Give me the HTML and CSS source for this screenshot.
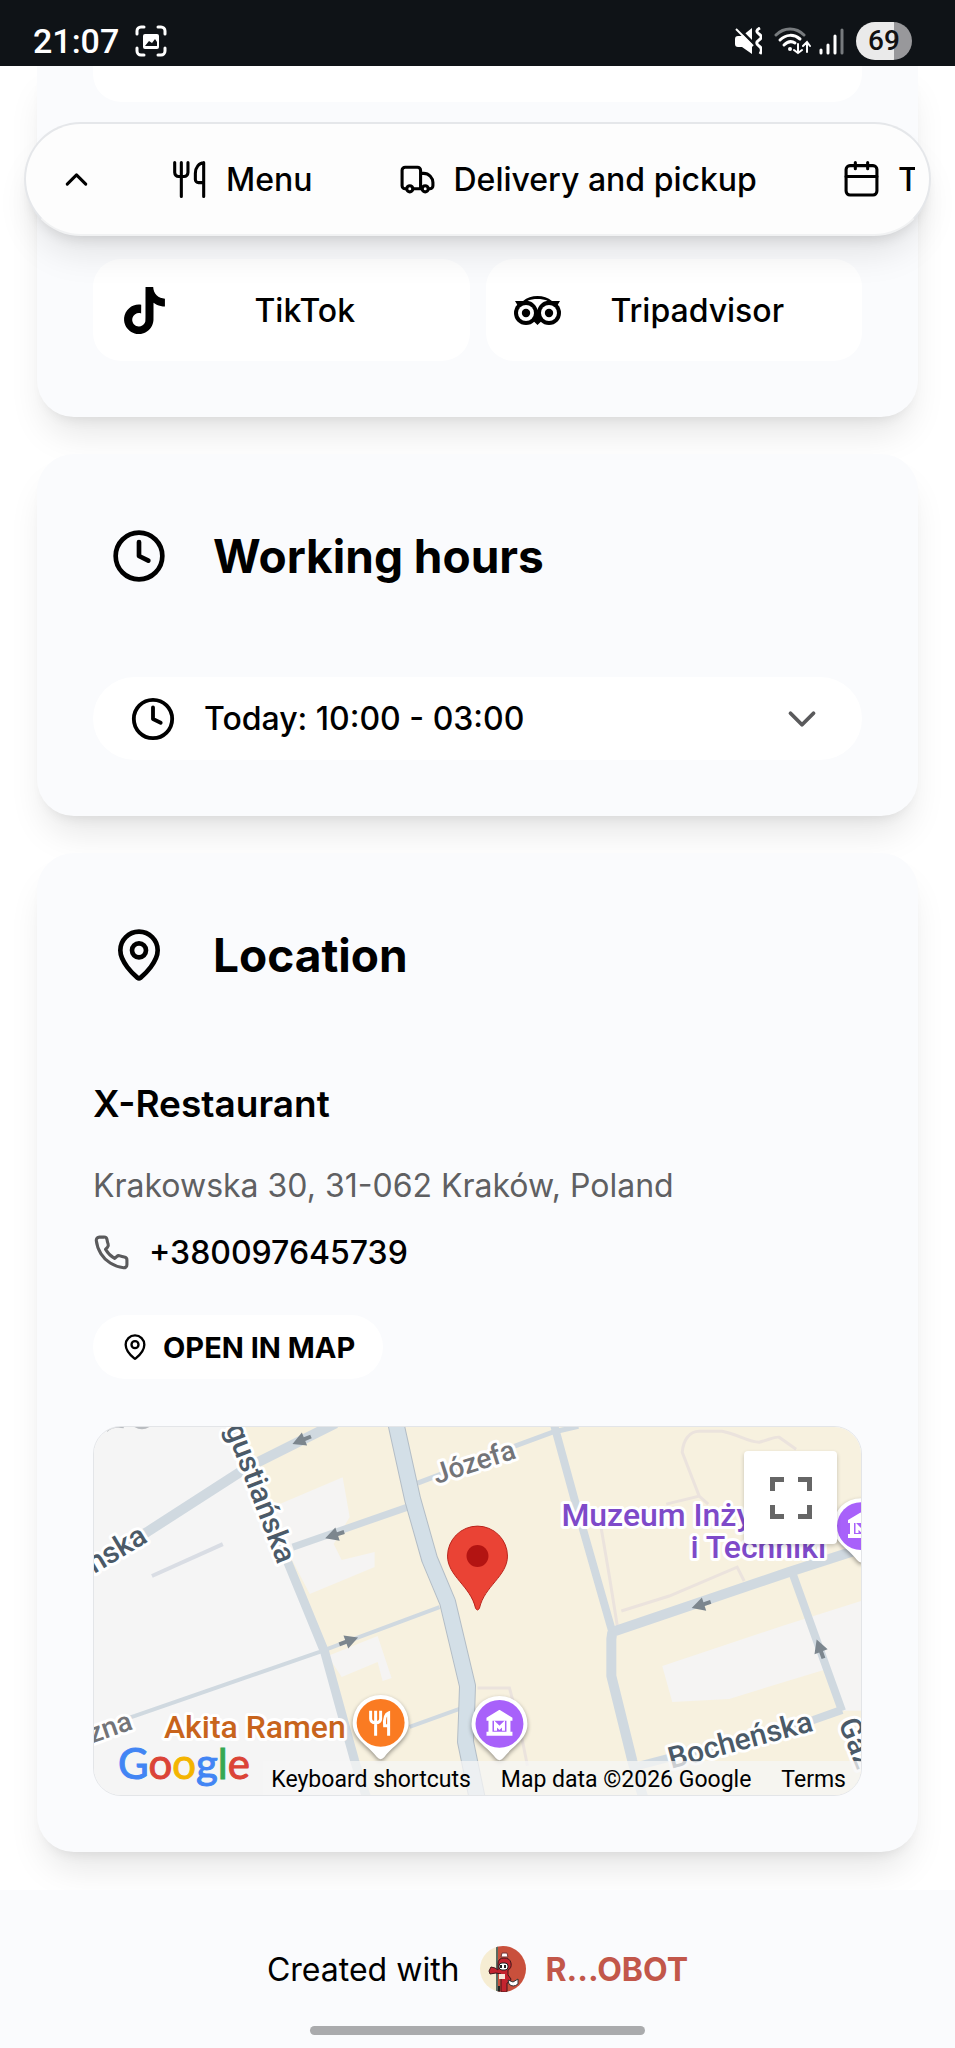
FILE: index.html
```html
<!DOCTYPE html>
<html lang="en">
<head>
<meta charset="utf-8">
<meta name="viewport" content="width=device-width, initial-scale=1">
<title>X-Restaurant</title>
<link rel="stylesheet" href="styles.css">
</head>
<body>
<svg class="defs" aria-hidden="true">
  <symbol id="clock" viewBox="0 0 24 24"><circle cx="12" cy="12" r="10"/><path d="M12 6v6l4 2"/></symbol>
  <symbol id="pin" viewBox="0 0 24 24"><path d="M20 10c0 5-5.500 10.200-7.400 11.800a1 1 0 0 1-1.200 0C9.500 20.200 4 15 4 10a8 8 0 0 1 16 0z"/><circle cx="12" cy="10" r="3"/></symbol>
  <symbol id="arrow" viewBox="-11 -8 22 16"><path d="M-10 0L3-7V-2H10V2H3V7z"/></symbol>
  <symbol id="museum" viewBox="-14 -14 28 28"><path fill="#fff" d="M0-14L13-6V-3H-13V-6zM-11-3h4V9h-4zM7-3h4V9H7zM-13 8h26v4h-26z"/><path fill="none" stroke="#fff" stroke-width="3" d="M-4 7V0L0 4L4 0V7"/></symbol>
</svg>

<header class="status">
  <span class="time">21:07</span>
  <svg class="shot" viewBox="0 0 32 32"><path fill="none" stroke="#fff" stroke-width="3" stroke-linecap="round" d="M2 9V6a4 4 0 0 1 4-4h3M23 2h3a4 4 0 0 1 4 4v3M30 23v3a4 4 0 0 1-4 4h-3M9 30H6a4 4 0 0 1-4-4v-3"/><rect x="8" y="9" width="16" height="15" rx="2" fill="#fff"/><path fill="#0f1317" d="M10 21l4-5 3 2 3-4 2 3v4z"/></svg>
  <div class="status-right">
    <svg class="mute" viewBox="0 0 28 28"><path fill="#fff" d="M1 12a3 3 0 0 1 3-3h4l10-8v26L8 20H4a3 3 0 0 1-3-3z"/><path stroke="#0f1317" stroke-width="3" d="M4 1l17 17"/><path stroke="#fff" stroke-width="2" d="M2 2l17 17"/><path fill="none" stroke="#fff" stroke-width="3" d="M26 1c-4 2-4 4-1 6s3 4 0 6-3 4 0 6 3 5 1 8"/></svg>
    <svg class="wifi" viewBox="0 0 37 28" fill="none" stroke-width="3" stroke-linecap="round"><path stroke="#777b7e" d="M2 8C10 0 22 0 30 8"/><path stroke="#fff" d="M6 13C12 7 20 7 26 12M10 18C14 14 18 14 21 16"/><circle cx="16" cy="22" r="2" fill="#fff" stroke="none"/><path stroke="#fff" stroke-width="2" d="M24 17v9M20 23l4 3 4-3M33 25V15M29 19l4-4 3 4"/></svg>
    <svg class="signal" viewBox="0 0 25 28" stroke-width="3" stroke-linecap="round" stroke="#fff"><path d="M2 23v3M9 18v8M16 9v17"/><path stroke="#777b7e" d="M23 3v23"/></svg>
    <span class="battery">69</span>
  </div>
</header>

<nav class="nav">
  <button class="nav-up" aria-label="Back to top"><svg class="ico s" viewBox="0 0 24 24"><path d="M6 15l6-6 6 6"/></svg></button>
  <div class="nav-list">
    <a href="#menu"><svg class="ico s" viewBox="0 0 24 24"><path d="M2.400 1v6.500A2.500 2.500 0 0 0 4.900 10h3.600A2.500 2.500 0 0 0 11 7.500V1M6.700 1v22M21.200 1v22M21.200 1.200c-3 0-5.400 3-5.400 6.800v4a2 2 0 0 0 2 2h3.400"/></svg>Menu</a>
    <a href="#delivery"><svg class="ico s" viewBox="0 0 24 24"><path d="M14 18V6a2 2 0 0 0-2-2H4a2 2 0 0 0-2 2v10a2 2 0 0 0 2 2h1M15 18H9M19 18h1a2 2 0 0 0 2-2v-2c0-3-2.500-6-6-6h-2"/><circle cx="17" cy="18" r="2"/><circle cx="7" cy="18" r="2"/></svg>Delivery and pickup</a>
    <a href="#table"><svg class="ico s" viewBox="0 0 24 24"><path d="M8 1v4M16 1v4M2 10h20"/><rect x="2" y="3" width="20" height="19" rx="2.500"/></svg>T</a>
  </div>
</nav>

<main class="page">
  <section class="card card-links">
    <div class="tile-end"></div>
    <div class="links">
      <a class="tile" href="#tiktok"><svg viewBox="0 0 24 24"><path d="M12.525.02c1.310-.02 2.610-.01 3.910-.02.08 1.530.63 3.090 1.750 4.170 1.120 1.110 2.700 1.620 4.240 1.790v4.030c-1.440-.05-2.890-.35-4.200-.97-.57-.26-1.100-.59-1.620-.93-.01 2.920.01 5.840-.02 8.750-.08 1.400-.54 2.790-1.350 3.940-1.310 1.920-3.580 3.170-5.910 3.210-1.430.08-2.860-.31-4.080-1.030-2.020-1.190-3.440-3.370-3.650-5.710-.02-.5-.03-1-.01-1.490.18-1.900 1.120-3.720 2.580-4.960 1.660-1.440 3.980-2.130 6.150-1.720.02 1.480-.04 2.960-.04 4.440-.99-.32-2.150-.23-3.020.37-.63.41-1.110 1.040-1.360 1.750-.21.51-.15 1.070-.14 1.610.24 1.640 1.820 3.020 3.500 2.870 1.120-.01 2.190-.66 2.770-1.610.19-.33.4-.67.41-1.060.1-1.790.06-3.570.07-5.360.01-4.030-.01-8.050.02-12.070z"/></svg><span>TikTok</span></a>
      <a class="tile" href="#tripadvisor"><svg viewBox="0 -9 47 47"><path d="M1 5h8C13 1.500 18 0 23.500 0S34 1.500 38 5h8l-3 5L23.500 29 4 10z"/><circle cx="12" cy="17" r="12"/><circle cx="35" cy="17" r="12"/><path fill="#fff" d="M13.500 4.800C16 3.500 20 3 23.500 3s7.500.5 10 1.800C28.500 5.500 24.500 9.500 23.500 14c-1-4.500-5-8.500-10-9.200z"/><circle cx="12" cy="17" r="8" fill="#fff"/><circle cx="35" cy="17" r="8" fill="#fff"/><circle cx="12" cy="17" r="4.200"/><circle cx="35" cy="17" r="4.200"/></svg><span>Tripadvisor</span></a>
    </div>
  </section>

  <section class="card">
    <div class="head"><svg class="ico l"><use href="#clock"/></svg><h2>Working hours</h2></div>
    <button class="hours"><svg class="ico m"><use href="#clock"/></svg><span>Today: 10:00 - 03:00</span><svg class="ico m muted" viewBox="0 0 24 24"><path d="M6 9l6 6 6-6"/></svg></button>
  </section>

  <section class="card">
    <div class="head"><svg class="ico l"><use href="#pin"/></svg><h2>Location</h2></div>
    <h3>X-Restaurant</h3>
    <p class="address">Krakowska 30, 31-062 Kraków, Poland</p>
    <a class="phone" href="tel:+380097645739"><svg class="ico s muted" viewBox="0 0 24 24"><path d="M22 16.920v3a2 2 0 0 1-2.180 2 19.790 19.790 0 0 1-8.630-3.070 19.500 19.500 0 0 1-6-6 19.790 19.790 0 0 1-3.070-8.670A2 2 0 0 1 4.110 2h3a2 2 0 0 1 2 1.720 12.840 12.840 0 0 0 .7 2.810 2 2 0 0 1-.45 2.110L8.090 9.910a16 16 0 0 0 6 6l1.270-1.270a2 2 0 0 1 2.110-.45 12.840 12.840 0 0 0 2.810.7A2 2 0 0 1 22 16.920z"/></svg>+380097645739</a>
    <a class="open" href="#map"><svg class="ico xs"><use href="#pin"/></svg>OPEN IN MAP</a>
    <div class="map" id="map">
      <svg class="map-canvas" viewBox="0 0 768 370" preserveAspectRatio="xMidYMid slice">
        <rect width="768" height="370" fill="#f5f5f5"/>
        <path fill="#f7f1df" d="M145 0H768V370H272L261 335L231 226L194 136z"/>
        <g fill="#f5f4f3">
          <path d="M176 82L249 51L256 91L240 118L248 134L281 126V141L216 168L190 118z"/>
          <path d="M234 230L284 210L298 252L289 255L284 236L248 251z"/>
          <path d="M569 240L689 200L768 175V285H748L734 243L636 273L579 276z"/>
        </g>
        <g fill="none" stroke="#ebe3dd" stroke-width="3">
          <path d="M508 103L516 150L524 200M528 185L576 170L644 141L651 155M573 78L606 70L615 78M606 70L589 26C590 14 596 5 606 5L629 5C645 8 655 16 666 16C675 14 682 10 686 11L703 23M384 262H416L426 300L434 340"/>
        </g>
        <path fill="none" stroke="#b9bcc0" stroke-width="4" d="M12 4Q18-2 30 0M40-2Q48 4 56-2"/>
        <g fill="none" stroke="#d0d9e0" stroke-linejoin="round">
          <path stroke-width="10" d="M-5 140L53 106L146 46L166 35L242-3"/>
          <path stroke-width="9" d="M135-10L194 136L231 226L261 335L274 375"/>
          <path stroke="#d9dde4" stroke-width="4" d="M58 150L129 118"/>
          <path stroke-width="7" d="M199 121L314 81"/>
          <path stroke-width="4" d="M0 303L41 290L226 226L266 211L346 181M316 301L366 283"/>
          <path stroke-width="5" d="M324 57L421 20L459 6L485 0"/>
          <path stroke-width="8" d="M460-4L483 80L519 206"/>
          <path stroke-width="10" d="M519 206L518 213V250L539 335L550 372M519 206L696 146L770 122"/>
          <path stroke-width="8" d="M699 146L749 285M545 340L721 294L749 284"/>
        </g>
        <path fill="none" stroke="#b3bdc6" stroke-width="17" stroke-linejoin="round" d="M302-4L319 73L336 133L354 176L374 260L373 290L372 316L384 374"/>
        <path fill="none" stroke="#d3dfe7" stroke-width="15" stroke-linejoin="round" d="M302-4L319 73L336 133L354 176L374 260L373 290L372 316L384 374"/>
        <g fill="#7c868e">
          <use href="#arrow" width="22" height="16" transform="translate(208 14) rotate(-22) translate(-11 -8)"/>
          <use href="#arrow" width="22" height="16" transform="translate(241 109) rotate(-18) translate(-11 -8)"/>
          <use href="#arrow" width="22" height="16" transform="translate(255 215) rotate(160) translate(-11 -8)"/>
          <use href="#arrow" width="22" height="16" transform="translate(608 179) rotate(-18) translate(-11 -8)"/>
          <use href="#arrow" width="22" height="16" transform="translate(727 223) rotate(70) translate(-11 -8)"/>
        </g>
        <g class="label">
          <text transform="translate(184 139) rotate(69)" text-anchor="end">gustiańska</text>
          <text transform="translate(55 115) rotate(-31)" text-anchor="end">nska</text>
          <text transform="translate(40 303) rotate(-19)" text-anchor="end" class="minor">zna</text>
          <text transform="translate(343 58) rotate(-18)" class="minor">Józefa</text>
          <text transform="translate(578 343) rotate(-15)">Bocheńska</text>
          <text transform="translate(745 297) rotate(68)">Gaz</text>
        </g>
        <g class="poi">
          <text x="468" y="100" class="violet">Muzeum Inży</text>
          <text x="733" y="132" text-anchor="end" class="violet">i Techniki</text>
          <text x="70" y="312" class="orange">Akita Ramen</text>
        </g>
        <g class="marker">
          <path d="M259 297a28 28 0 1 1 56 0c0 16-15 22-24 34q-4 5-8 0c-9-12-24-18-24-34z"/>
          <path d="M378 298a28 28 0 1 1 56 0c0 16-15 22-24 34q-4 5-8 0c-9-12-24-18-24-34z"/>
          <path d="M740 100a28 28 0 1 1 56 0c0 16-15 22-24 34q-4 5-8 0c-9-12-24-18-24-34z"/>
        </g>
        <circle cx="287" cy="297" r="24" fill="#fa7b22"/>
        <path fill="none" stroke="#fff" stroke-width="3" d="M277 285v8q0 4 5 4t5-4v-8M282 285v25M295 310V287q-5 2-4 13h4"/>
        <circle cx="406" cy="298" r="24" fill="#a861fa"/>
        <use href="#museum" x="392" y="284" width="28" height="28"/>
        <circle cx="768" cy="100" r="24" fill="#a861fa"/>
        <use href="#museum" x="754" y="86" width="28" height="28"/>
        <path fill="#ea4335" stroke="#b9231b" stroke-width="1" d="M354 130a30 30 0 1 1 60 0c0 20-23 30-28 52q-2 4-4 0c-5-22-28-32-28-52z"/>
        <circle cx="384" cy="130" r="11" fill="#b31412"/>
      </svg>
      <button class="full" aria-label="Toggle fullscreen view"><svg viewBox="0 0 42 42"><path fill="none" stroke="#666" stroke-width="5" d="M2.500 14V2.500H14M28 2.500H39.500V14M39.500 28V39.500H28M14 39.500H2.500V28"/></svg></button>
      <a class="google" href="#google"><span class="b">G</span><span class="r">o</span><span class="y">o</span><span class="b">g</span><span class="g">l</span><span class="r">e</span></a>
      <div class="credits"><button>Keyboard shortcuts</button><span>Map data ©2026 Google</span><a href="#terms">Terms</a></div>
    </div>
  </section>
</main>

<footer class="footer">
  <span>Created with</span>
  <svg class="avatar" viewBox="0 0 46 46"><clipPath id="round"><circle cx="23" cy="23" r="23"/></clipPath><g clip-path="url(#round)"><path fill="#f6edd3" d="M0 0h17v46H0z"/><path fill="#c9503c" d="M17 0h29v46H17z"/><path fill="#5b6a60" d="M16 0h2v46h-2z"/><path fill="#c4242f" stroke="#40171c" d="M18 18q0-6 6-6t7 5q1 5-3 7v5l3 4q0 3-4 4v9h-6V28l-5-1-6 1-1-3 2-4 4 1 3 2z"/><rect x="19" y="17" width="9" height="7" rx="3" fill="#fff" stroke="#222"/><path stroke="#222" stroke-width="2" d="M21 19v3M25 19v3M19 40v6"/><path fill="#fff" stroke="#733" d="M21 11l1-4h5l1 4z"/><path fill="#f8e7dc" d="M19 28h6v5h-6z"/><path fill="#fff" stroke="#333" d="M28 34l5 2 5-3v5q-5 4-9 0z"/></g></svg>
  <a href="#robot">R...OBOT</a>
</footer>
<div class="home-bar"></div>
</body>
</html>
```
FILE: styles.css
```css
* { box-sizing: border-box; }
body {
  margin: 0;
  min-height: 100vh;
  display: flex;
  flex-direction: column;
  background: #fff;
  color: #000;
  font-family: Inter, "Liberation Sans", sans-serif;
  font-size: 32px;
  line-height: 47px;
}
a { color: inherit; text-decoration: none; }
button { border: 0; margin: 0; padding: 0; background: none; font: inherit; color: inherit; }
h2, h3, p { margin: 0; }
svg { display: block; flex: none; }
.defs { position: absolute; width: 0; height: 0; }

.ico { fill: none; stroke: currentColor; stroke-width: 2; stroke-linecap: round; stroke-linejoin: round; }
.ico.xs { width: 28px; height: 28px; }
.ico.s { width: 37px; height: 37px; }
.ico.m { width: 46px; height: 46px; }
.ico.l { width: 56px; height: 56px; }
.muted { color: #5a5a5c; }

.status {
  position: relative;
  z-index: 1;
  height: 66px;
  padding: 16px 43px 0 33px;
  display: flex;
  align-items: center;
  background: #0f1317;
  color: #fff;
  font-family: Roboto, sans-serif;
}
.time { font-size: 34px; font-weight: 500; }
.shot { width: 32px; height: 32px; margin-left: 16px; }
.status-right { margin-left: auto; display: flex; align-items: center; gap: 12px; }
.mute { width: 28px; height: 28px; }
.wifi { width: 37px; height: 28px; }
.signal { width: 25px; height: 28px; margin-left: -4px; }
.battery {
  width: 56px;
  height: 38px;
  border-radius: 19px;
  background: linear-gradient(90deg, #eaeaea 68%, #98989b 68%);
  color: #111;
  font-size: 28px;
  font-weight: 500;
  line-height: 38px;
  text-align: center;
}

.nav {
  position: absolute;
  z-index: 2;
  top: 122px;
  left: 24px;
  right: 24px;
  height: 114px;
  padding: 0 14px 0 32px;
  display: flex;
  align-items: center;
  gap: 76px;
  border: 2px solid #e5e7ea;
  border-bottom-color: #f1f2f3;
  border-radius: 57px;
  background: #fdfdfd;
  box-shadow: 0 24px 36px -8px rgba(0, 0, 0, .1), 0 10px 14px -8px rgba(0, 0, 0, .12);
  font-weight: 500;
}
.nav-list { flex: 1; min-width: 0; overflow: hidden; display: flex; gap: 86px; }
.nav-list a { flex: none; display: flex; align-items: center; gap: 18px; }

.page { padding: 0 37px; flex: 1; display: flex; flex-direction: column; gap: 37px; margin-bottom: 37px; }
.card {
  padding: 56px;
  border-radius: 37px;
  background: #fafbfd;
  box-shadow: 0 24px 36px -8px rgba(0, 0, 0, .1), 0 9px 14px -9px rgba(0, 0, 0, .1);
}
.card-links { padding-top: 0; border-radius: 0 0 37px 37px; }
.tile-end { height: 36px; border-radius: 0 0 28px 28px; background: #fff; }
.links { margin-top: 157px; display: grid; grid-template-columns: 1fr 1fr; gap: 16px; }
.tile {
  height: 102px;
  padding: 0 28px;
  display: flex;
  align-items: center;
  border-radius: 28px;
  background: #fff;
  font-weight: 500;
}
.tile svg { width: 47px; height: 47px; }
.tile span { flex: 1; text-align: center; }

.head { display: flex; align-items: center; gap: 46px; padding: 18px; margin-bottom: 75px; }
h2 { font-size: 46px; font-weight: 700; line-height: 56px; }
h3 { font-size: 37px; font-weight: 600; line-height: 56px; }
.hours {
  width: 100%;
  height: 83px;
  padding: 0 37px;
  display: flex;
  align-items: center;
  gap: 28px;
  border-radius: 42px;
  background: #fff;
  font-weight: 500;
}
.hours span { flex: 1; text-align: left; }
.address { margin-top: 30px; color: #5f6062; }
.phone { margin-top: 20px; display: flex; align-items: center; gap: 19px; font-weight: 500; }
.open {
  width: fit-content;
  height: 64px;
  margin-top: 39px;
  padding: 0 28px;
  display: flex;
  align-items: center;
  gap: 14px;
  border-radius: 32px;
  background: #fff;
  font-size: 29px;
  font-weight: 700;
}

.map {
  position: relative;
  height: 370px;
  margin-top: 47px;
  overflow: hidden;
  border: 1px solid #e3e5e8;
  border-radius: 28px;
  font-family: Roboto, sans-serif;
}
.map-canvas { width: 100%; height: 100%; }
.label text { font-size: 30px; font-weight: 500; fill: #4b5a68; stroke: #fff; stroke-width: 6px; paint-order: stroke; stroke-linejoin: round; }
.label .minor { font-size: 28px; fill: #737478; }
.poi text { font-size: 32px; font-weight: 500; stroke: #fff; stroke-width: 6px; paint-order: stroke; stroke-linejoin: round; }
.poi .violet { fill: #7e4ac9; }
.poi .orange { fill: #c8641c; }
.marker { fill: #fff; filter: drop-shadow(0 2px 2px rgba(0, 0, 0, .4)); }
.full {
  position: absolute;
  top: 24px;
  right: 24px;
  width: 93px;
  height: 93px;
  display: grid;
  place-items: center;
  border-radius: 4px;
  background: #fff;
  box-shadow: 0 2px 4px rgba(0, 0, 0, .2);
}
.full svg { width: 42px; height: 42px; }
.google { position: absolute; left: 24px; bottom: 12px; font-family: Lato, sans-serif; font-size: 42px; line-height: 40px; -webkit-text-stroke: 1px; }
.b { color: #4285f4; }
.r { color: #db4437; }
.y { color: #f4b400; }
.g { color: #34a853; }
.credits {
  position: absolute;
  right: 0;
  bottom: 0;
  height: 34px;
  padding: 4px 15px 0 8px;
  display: flex;
  align-items: center;
  gap: 30px;
  background: rgba(245, 245, 245, .75);
  font-size: 23px;
  line-height: 30px;
}

.footer {
  height: 158px;
  display: flex;
  align-items: center;
  justify-content: center;
  gap: 20px;
  background: #fafbfd;
}
.footer a { color: #c2574a; font-weight: 700; }
.avatar { width: 46px; height: 46px; }
.home-bar {
  position: absolute;
  top: 2026px;
  left: 50%;
  width: 35%;
  height: 9px;
  margin-left: -17.5%;
  border-radius: 5px;
  background: #aaabad;
}
```
